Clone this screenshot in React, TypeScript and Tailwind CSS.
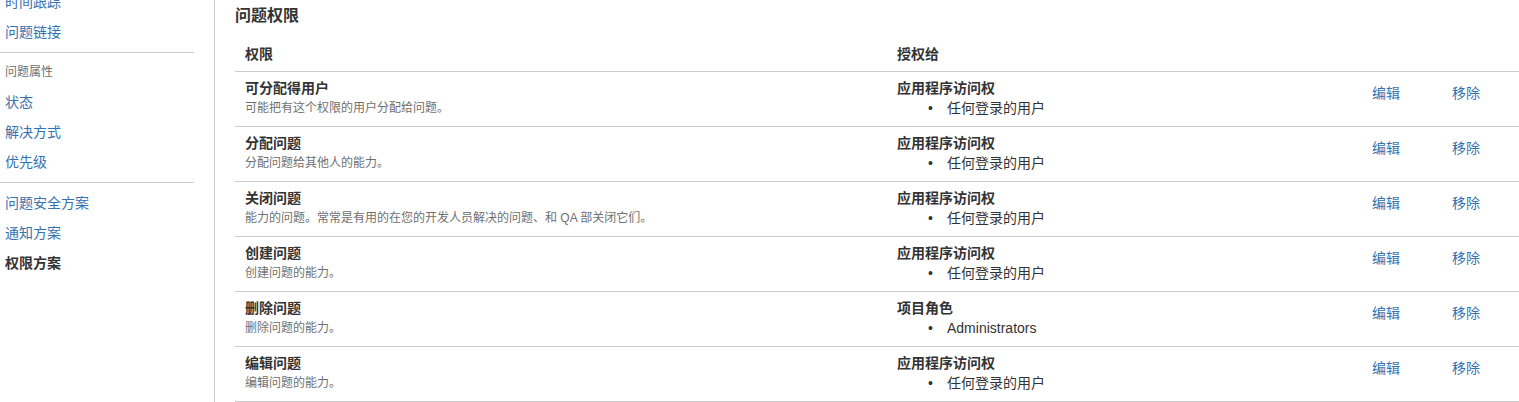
const font = { fontFamily: '"Liberation Sans", "Noto Sans CJK SC", sans-serif' };

type Perm = {
    name: string;
    desc: string;
    grantType: string;
    grantee: string;
};

const PERMISSIONS: Perm[] = [
    { name: '可分配得用户', desc: '可能把有这个权限的用户分配给问题。', grantType: '应用程序访问权', grantee: '任何登录的用户' },
    { name: '分配问题', desc: '分配问题给其他人的能力。', grantType: '应用程序访问权', grantee: '任何登录的用户' },
    { name: '关闭问题', desc: '能力的问题。常常是有用的在您的开发人员解决的问题、和 QA 部关闭它们。', grantType: '应用程序访问权', grantee: '任何登录的用户' },
    { name: '创建问题', desc: '创建问题的能力。', grantType: '应用程序访问权', grantee: '任何登录的用户' },
    { name: '删除问题', desc: '删除问题的能力。', grantType: '项目角色', grantee: 'Administrators' },
    { name: '编辑问题', desc: '编辑问题的能力。', grantType: '应用程序访问权', grantee: '任何登录的用户' },
];

function NavLink({ label }: { label: string }) {
    return (
        <li className="py-[5px] pl-[5px] leading-5">
            <a className="text-[#3572b0] cursor-pointer">{label}</a>
        </li>
    );
}

function Sidebar() {
    return (
        <div className="w-[214px] shrink-0 pr-[20px] mt-[-13px] text-[14px]">
            <ul>
                <NavLink label="时间跟踪" />
                <NavLink label="问题链接" />
            </ul>
            <div className="mt-[5px] border-t border-[#ccc] pt-[5px]">
                <ul>
                    <li className="h-[29px] pl-[5px] text-[12px] text-[#707070] leading-[29px]">问题属性</li>
                    <NavLink label="状态" />
                    <NavLink label="解决方式" />
                    <NavLink label="优先级" />
                </ul>
            </div>
            <div className="mt-[5px] border-t border-[#ccc] pt-[5px]">
                <ul>
                    <NavLink label="问题安全方案" />
                    <NavLink label="通知方案" />
                    <li className="py-[5px] pl-[5px] leading-5 font-bold text-[#333]">权限方案</li>
                </ul>
            </div>
        </div>
    );
}

export default function App() {
    return (
        <div className="flex h-[402px] overflow-hidden bg-white text-[#333]" style={font}>
            <Sidebar />

            <div className="flex-1 border-l border-[#ccc] pl-[20px] pt-[4px]">
                <h2 className="text-[16px] leading-6 font-semibold mb-[9px]">问题权限</h2>

                {/* 表头 */}
                <div className="grid grid-cols-[652px_475px_80px_1fr] border-b border-[#ccc] text-[14px] leading-5 font-bold">
                    <div className="pl-[10px] pt-[7px] pb-[7px]">权限</div>
                    <div className="pl-[10px] pt-[7px] pb-[7px]">授权给</div>
                    <div />
                    <div />
                </div>

                {/* 权限列表 */}
                {PERMISSIONS.map((p) => (
                    <div key={p.name} className="grid grid-cols-[652px_475px_80px_1fr] border-b border-[#ccc] text-[14px] leading-5">
                        <div className="pl-[10px] pt-[6px] pb-[8px]">
                            <div className="font-bold">{p.name}</div>
                            <div className="text-[12px] text-[#707070]">{p.desc}</div>
                        </div>
                        <div className="pl-[10px] pt-[6px] pb-[8px]">
                            <div className="font-bold">{p.grantType}</div>
                            <div className="flex">
                                <span className="w-[50px] pl-[31px]">•</span>
                                <span>{p.grantee}</span>
                            </div>
                        </div>
                        <div className="pl-[10px] pt-[11px]">
                            <a className="text-[#3572b0] cursor-pointer">编辑</a>
                        </div>
                        <div className="pl-[10px] pt-[11px]">
                            <a className="text-[#3572b0] cursor-pointer">移除</a>
                        </div>
                    </div>
                ))}
            </div>
        </div>
    );
}
